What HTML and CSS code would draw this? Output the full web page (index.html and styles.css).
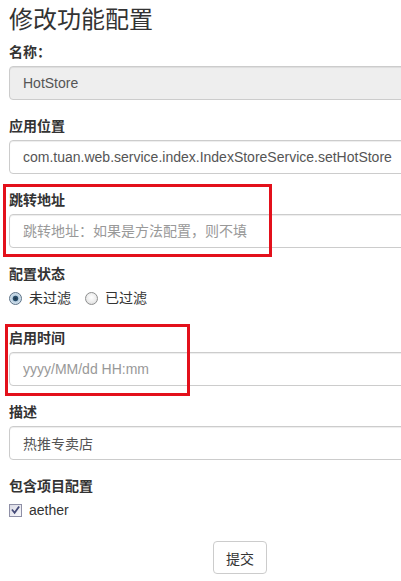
FILE: index.html
```html
<!DOCTYPE html>
<html lang="zh-CN">
<head>
<meta charset="utf-8">
<title>修改功能配置</title>
<link rel="stylesheet" href="styles.css">
</head>
<body>
<form class="form">
  <h3 class="title">修改功能配置</h3>

  <div class="group">
    <label class="label">名称：</label>
    <input class="control" type="text" value="HotStore" disabled>
  </div>

  <div class="group">
    <label class="label">应用位置</label>
    <input class="control" type="text" value="com.tuan.web.service.index.IndexStoreService.setHotStore">
  </div>

  <div class="group marked">
    <label class="label">跳转地址</label>
    <input class="control" type="text" placeholder="跳转地址：如果是方法配置，则不填">
    <span class="mark mark-a"></span>
  </div>

  <div class="group group-radio">
    <label class="label">配置状态</label>
    <div class="choices">
      <label class="choice"><span class="radio radio-on"></span>未过滤</label>
      <label class="choice"><span class="radio"></span>已过滤</label>
    </div>
  </div>

  <div class="group marked">
    <label class="label">启用时间</label>
    <input class="control" type="text" placeholder="yyyy/MM/dd HH:mm">
    <span class="mark mark-b"></span>
  </div>

  <div class="group">
    <label class="label">描述</label>
    <input class="control" type="text" value="热推专卖店">
  </div>

  <div class="group">
    <label class="label">包含项目配置</label>
    <div class="choices">
      <label class="choice"><span class="check"><svg viewBox="0 0 11 11" width="11" height="11"><path d="M2.5 5.2 L4.6 7.8 L8.6 2.2" fill="none" stroke="#454a78" stroke-width="1.8" stroke-linecap="square"/></svg></span>aether</label>
    </div>
  </div>

  <div class="actions">
    <button class="btn" type="button">提交</button>
  </div>
</form>
</body>
</html>
```

FILE: styles.css
```css
html, body {
  margin: 0;
  padding: 0;
  overflow: hidden;
  background: #fff;
}

body {
  font-family: "Liberation Sans", "Noto Sans CJK SC", sans-serif;
  font-size: 14px;
  line-height: 20px;
  color: #333;
}

.form {
  width: 462px;
  padding-left: 9px;
}

.title {
  margin: 5px 0 10px;
  font-family: "Noto Sans CJK SC", sans-serif;
  font-size: 24px;
  font-weight: 400;
  line-height: 26px;
  color: #333;
}

.group {
  margin-bottom: 15px;
}

.marked {
  position: relative;
}

.group-radio {
  margin-bottom: 19px;
}

.label {
  display: block;
  margin-bottom: 5px;
  font-family: "Noto Sans CJK SC", sans-serif;
  font-weight: bold;
  font-size: 14px;
  line-height: 20px;
}

.control {
  display: block;
  box-sizing: border-box;
  width: 462px;
  height: 34px;
  margin: 0;
  padding: 6px 12px 6px 13px;
  font-family: inherit;
  font-size: 14px;
  line-height: 20px;
  color: #555;
  background: #fff;
  border: 1px solid #ccc;
  border-radius: 4px;
  box-shadow: inset 0 1px 1px rgba(0, 0, 0, 0.075);
}

.control::placeholder {
  color: #999;
}

.control:disabled {
  background: #eee;
  color: #555;
  -webkit-text-fill-color: #555;
  opacity: 1;
}

.mark {
  position: absolute;
  box-sizing: border-box;
  border: 3px solid #e3101b;
  pointer-events: none;
}

.mark-a {
  left: -6px;
  top: -5px;
  width: 269px;
  height: 73px;
}

.mark-b {
  left: -4px;
  top: -3px;
  width: 185px;
  height: 72px;
}

.choices {
  display: flex;
  gap: 14px;
  height: 20px;
  align-items: center;
}

.choice {
  display: flex;
  align-items: center;
  gap: 7px;
  font-size: 14px;
  line-height: 20px;
  color: #333;
}

.radio {
  box-sizing: border-box;
  width: 13px;
  height: 13px;
  border-radius: 50%;
  border: 1px solid #8e8f8f;
  background: radial-gradient(circle at 50% 40%, #ffffff 0, #ececec 55%, #d2d2d2 100%);
}

.radio-on {
  border-color: #5c7287;
  background: radial-gradient(circle, #1d3447 0, #2c5270 2.4px, #b9cfe0 3.2px, #eaf1f7 100%);
}

.check {
  box-sizing: border-box;
  width: 13px;
  height: 13px;
  display: flex;
  align-items: center;
  justify-content: center;
  border: 1px solid #8e8fa6;
  background: linear-gradient(135deg, #dcdce6 0, #f8f8fb 100%);
}

.check svg {
  display: block;
}

.actions {
  display: flex;
  justify-content: center;
  padding-top: 6px;
}

.btn {
  box-sizing: border-box;
  height: 33px;
  padding: 6px 12px;
  font-family: "Noto Sans CJK SC", sans-serif;
  font-size: 14px;
  line-height: 20px;
  color: #333;
  background: #fff;
  border: 1px solid #ccc;
  border-radius: 4px;
}
```
